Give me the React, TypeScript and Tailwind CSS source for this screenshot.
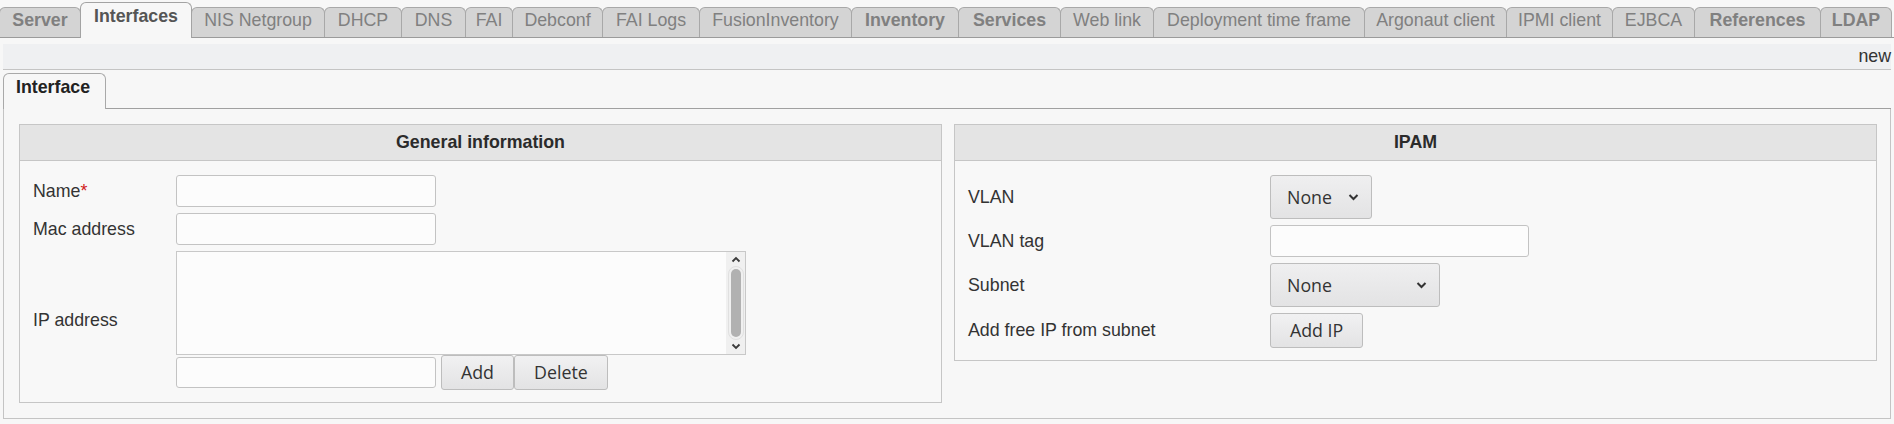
import React from "react";

interface Tab {
  label: string;
  width: string;
  bold?: boolean;
  active?: boolean;
}

const tabs: Tab[] = [
  { label: "Server", width: "w-[82px]", bold: true },
  { label: "Interfaces", width: "w-[112px]", bold: true, active: true },
  { label: "NIS Netgroup", width: "w-[134px]" },
  { label: "DHCP", width: "w-[78px]" },
  { label: "DNS", width: "w-[65px]" },
  { label: "FAI", width: "w-[48px]" },
  { label: "Debconf", width: "w-[91px]" },
  { label: "FAI Logs", width: "w-[98px]" },
  { label: "FusionInventory", width: "w-[153px]" },
  { label: "Inventory", width: "w-[108px]", bold: true },
  { label: "Services", width: "w-[103px]", bold: true },
  { label: "Web link", width: "w-[94px]" },
  { label: "Deployment time frame", width: "w-[212px]" },
  { label: "Argonaut client", width: "w-[143px]" },
  { label: "IPMI client", width: "w-[107px]" },
  { label: "EJBCA", width: "w-[83px]" },
  { label: "References", width: "w-[127px]", bold: true },
  { label: "LDAP", width: "w-[72px]", bold: true },
];

function Chevron({ up = false }: { up?: boolean }) {
  return (
    <svg width="10" height="7" viewBox="0 0 10 7" className="block">
      <polyline
        points={up ? "1.5,5.5 5,2 8.5,5.5" : "1.5,1.5 5,5 8.5,1.5"}
        fill="none"
        stroke="#3a3a3a"
        strokeWidth="1.8"
      />
    </svg>
  );
}

function TextInput({ width = "w-[260px]", height = "h-[32px]" }: { width?: string; height?: string }) {
  return (
    <input
      type="text"
      className={`${width} ${height} rounded-[3px] border border-[#c3c3c3] bg-[#fcfcfc] px-2 outline-none`}
    />
  );
}

function Button({ children }: { children: React.ReactNode }) {
  return (
    <button className="h-[35px] rounded-[3px] border border-[#bdbdbd] bg-gradient-to-b from-[#f1f1f2] to-[#e3e3e4] px-[19px] font-['Open_Sans',sans-serif] leading-none text-[#333]">
      {children}
    </button>
  );
}

function Select({ width }: { width: string }) {
  return (
    <div
      className={`${width} flex h-[44px] items-center justify-between rounded-[3px] border border-[#bdbdbd] bg-gradient-to-b from-[#efeff0] to-[#e3e3e4] pl-[16px] pr-[12px] font-['Open_Sans',sans-serif] text-[#333]`}
    >
      <span>None</span>
      <svg width="11" height="8" viewBox="0 0 11 8" className="block">
        <polyline points="1.5,2 5.5,6 9.5,2" fill="none" stroke="#333" strokeWidth="2" />
      </svg>
    </div>
  );
}

function Panel({ title, children }: { title: string; children: React.ReactNode }) {
  return (
    <div className="border border-[#c6c6c6] bg-[#f8f8f8]">
      <div className="flex h-[36px] items-center justify-center border-b border-[#c6c6c6] bg-[#e4e4e4] font-bold text-[#2b2b2b]">
        {title}
      </div>
      {children}
    </div>
  );
}

export default function App() {
  return (
    <div className="h-[424px] w-[1894px] overflow-hidden bg-[#f7f7f7] font-['Liberation_Sans',Arial,sans-serif] text-[17.8px] text-[#333]">
      {/* Main tabs */}
      <div className="flex h-[38px] items-end border-b border-[#9b9b9b]">
        {tabs.map((tab) =>
          tab.active ? (
            <div
              key={tab.label}
              className={`${tab.width} relative z-10 -mb-px -ml-px h-[36px] shrink-0 rounded-t-[6px] border border-b-0 border-[#a3a3a3] bg-[#f7f7f7] pt-[3px] text-center font-bold leading-[20px] text-[#555]`}
            >
              {tab.label}
            </div>
          ) : (
            <div
              key={tab.label}
              className={`${tab.width} -ml-px h-[30px] shrink-0 rounded-t-[6px] border border-b-0 border-[#a8a8a8] bg-[#d4d4d4] pt-[2px] text-center leading-[20px] text-[#808080] ${tab.bold ? "font-bold" : ""}`}
            >
              {tab.label}
            </div>
          )
        )}
      </div>

      <div className="px-[3px] pt-[6px]">
        {/* Action band */}
        <div className="flex h-[26px] items-center justify-end border-b border-[#c4c4c4] bg-[#eff0f2]">
          <span className="whitespace-nowrap text-[#333]">new</span>
        </div>

        {/* Sub tabs */}
        <div className="mt-[3px] flex h-[36px] items-end">
          <div className="h-[36px] w-[103px] shrink-0 rounded-t-[6px] border border-b-0 border-[#a9a9a9] bg-[#f7f7f7] pl-[12px] pt-[3px] font-bold leading-[20px] text-[#222]">
            Interface
          </div>
          <div className="h-full flex-1 border-b border-[#a0a0a0]" />
        </div>

        <div className="border border-t-0 border-[#c4c4c4] pb-[15px] pl-[15px] pr-[13px] pt-[15px]">
          <div className="grid grid-cols-2 items-start gap-x-[12px]">
            {/* General information */}
            <Panel title="General information">
              <div className="grid grid-cols-[143px_1fr] items-center gap-y-[6px] pb-[12px] pl-[13px] pt-[14px]">
                <div>
                  Name<span className="text-[#d01818]">*</span>
                </div>
                <TextInput />

                <div>Mac address</div>
                <TextInput />

                <div>IP address</div>
                <div className="flex flex-col">
                  <div className="flex h-[104px] w-[570px] border border-[#c8c8c8] bg-[#fcfcfc]">
                    <div className="flex-1" />
                    <div className="flex w-[19px] flex-col items-center bg-[#f0f0f0] pt-[4px]">
                      <Chevron up />
                      <div className="mt-[6px] h-[68px] w-[10px] rounded-full bg-[#b1b1b1] outline outline-1 outline-offset-[2px] outline-[#e0e0e0]" />
                      <div className="mt-[6px]">
                        <Chevron />
                      </div>
                    </div>
                  </div>
                  <div className="flex h-[35px] items-center">
                    <TextInput height="h-[31px]" />
                    <div className="ml-[5px] flex">
                      <Button>Add</Button>
                      <Button>Delete</Button>
                    </div>
                  </div>
                </div>
              </div>
            </Panel>

            {/* IPAM */}
            <Panel title="IPAM">
              <div className="grid grid-cols-[302px_1fr] items-center gap-y-[6px] pb-[12px] pl-[13px] pt-[14px]">
                <div>VLAN</div>
                <Select width="w-[102px]" />

                <div>VLAN tag</div>
                <TextInput width="w-[259px]" />

                <div>Subnet</div>
                <Select width="w-[170px]" />

                <div>Add free IP from subnet</div>
                <div>
                  <Button>Add IP</Button>
                </div>
              </div>
            </Panel>
          </div>
        </div>
      </div>
    </div>
  );
}
